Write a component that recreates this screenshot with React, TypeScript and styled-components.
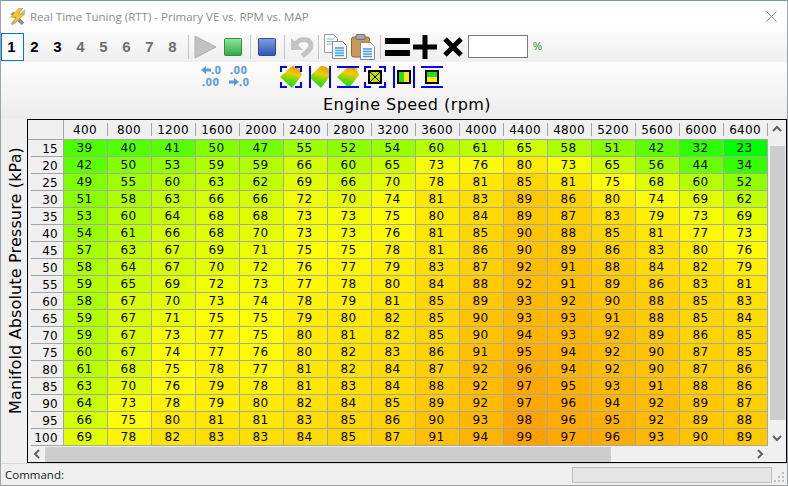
import React from "react"
import styled, { createGlobalStyle } from "styled-components"

const GlobalStyle = createGlobalStyle`
  html, body {
    margin: 0;
    padding: 0;
    width: 788px;
    height: 486px;
    overflow: hidden;
    background: #f0f0f0;
  }
`

const Win = styled.div`
  box-sizing: border-box;
  width: 788px;
  height: 486px;
  display: flex;
  flex-direction: column;
  background: #f0f0f0;
  border: 1px solid #9aa6a6;
  border-top-color: #6f9f9f;
  border-bottom-color: #a0a0a0;
  font-family: "DejaVu Sans", sans-serif;
  overflow: hidden;
`

const TitleBar = styled.div`
  height: 30px;
  display: flex;
  align-items: center;
  background: #fff;
  padding: 0 10px 0 8px;
  color: #8b8b8b;
  font: 11.5px "Open Sans", "Noto Sans", sans-serif;
  svg { flex: none; }
`

const TitleText = styled.span`
  margin-left: 4px;
  flex: 1;
`

const ToolRow = styled.div`
  height: 31px;
  box-sizing: border-box;
  display: flex;
  align-items: center;
  background: linear-gradient(#fbfbfb, #efefef);
`

const NumBtn = styled.div<{ $on?: boolean; $dim?: boolean }>`
  width: 23px;
  height: 28px;
  box-sizing: border-box;
  display: flex;
  align-items: center;
  justify-content: center;
  padding-right: 2px;
  font: bold 15px "Liberation Sans", sans-serif;
  color: ${p => (p.$dim ? "#6d6d6d" : "#000")};
  border: ${p => (p.$on ? "1px solid #0078d7" : "none")};
  background: ${p => (p.$on ? "#fafafa" : "transparent")};
`

const Sep = styled.div<{ $l?: number; $r?: number }>`
  width: 1px;
  height: 24px;
  background: #c4c4c4;
  margin: 0 ${p => p.$r ?? 5}px 0 ${p => p.$l ?? 5}px;
`

const Icon = styled.svg<{ $l?: number }>`
  display: block;
  flex: none;
  margin-left: ${p => p.$l ?? 0}px;
`

const PctBox = styled.div`
  width: 60px;
  height: 23px;
  box-sizing: border-box;
  margin-left: 5px;
  background: #fff;
  border: 1px solid #7a7a7a;
`

const Pct = styled.span`
  margin-left: 5px;
  font: 10px "Liberation Sans", sans-serif;
  color: #1a8a1a;
`

const Upper = styled.div`
  height: 57px;
  display: flex;
  flex-direction: column;
  background: linear-gradient(#fdfdfd, #ececec);
`

const IconRow = styled.div`
  display: flex;
  align-items: center;
  height: 28px;
  padding: 2px 0 0 199px;
  box-sizing: border-box;
`

const AxisTitle = styled.div`
  text-align: center;
  margin: 5px 0 0 26px;
  font-size: 16px;
  line-height: 19px;
  letter-spacing: 0.45px;
  color: #000;
`

const Middle = styled.div`
  display: flex;
  height: 344px;
`

const SideLabel = styled.div`
  width: 26px;
  flex: none;
  box-sizing: border-box;
  padding: 0 0 20px 3px;
  display: flex;
  align-items: center;
  justify-content: center;
`

const SideText = styled.span`
  writing-mode: vertical-rl;
  transform: rotate(180deg);
  font-size: 16px;
  letter-spacing: 0.15px;
  white-space: nowrap;
  color: #000;
`

const Frame = styled.div`
  box-sizing: border-box;
  width: 760px;
  height: 344px;
  border: 1px solid #000;
  display: grid;
  grid-template-columns: 740px 18px;
  grid-template-rows: 326px 16px;
  background: #f0f0f0;
`

const Sheet = styled.div`
  display: grid;
  grid-template-columns: 36px repeat(16, 44px);
  grid-template-rows: 20px repeat(18, 17px);
  font-size: 12px;
  line-height: 1;
  letter-spacing: 0.3px;
  color: #000;
  overflow: hidden;
`

const Corner = styled.div`
  border-right: 1px solid #a6a6a6;
  border-bottom: 1px solid #a6a6a6;
`

const ColHead = styled.div`
  position: relative;
  display: flex;
  align-items: center;
  justify-content: center;
  padding-right: 2px;
  border-bottom: 1px solid #a6a6a6;
  &::after {
    content: "";
    position: absolute;
    right: 0;
    top: 3px;
    bottom: 3px;
    width: 1px;
    background: #a6a6a6;
  }
`

const RowHead = styled.div`
  position: relative;
  display: flex;
  align-items: center;
  justify-content: flex-end;
  padding-right: 5px;
  border-right: 1px solid #a6a6a6;
  &::after {
    content: "";
    position: absolute;
    left: 3px;
    right: 0;
    bottom: 0;
    height: 1px;
    background: #a6a6a6;
  }
`

const heat = (v: number) => {
  if (v <= 75) return `rgb(${Math.round(((v - 23) / 52) * 255)},255,0)`
  return `rgb(255,${Math.round(255 - ((v - 75) / 24) * 95)},0)`
}

const Cell = styled.div<{ $v: number }>`
  display: flex;
  align-items: center;
  justify-content: center;
  padding-right: 2px;
  box-sizing: border-box;
  background: ${p => heat(p.$v)};
  border-right: 1px solid #a6a6a6;
  border-bottom: 1px solid #a6a6a6;
`

const VBar = styled.div`
  display: flex;
  flex-direction: column;
  align-items: flex-end;
  justify-content: space-between;
  padding-right: 1px;
  background: #f0f0f0;
`

const VThumb = styled.div`
  width: 15px;
  height: 274px;
  background: #cdcdcd;
`

const HBar = styled.div`
  display: flex;
  align-items: center;
  justify-content: space-between;
  background: #f0f0f0;
`

const HThumb = styled.div`
  width: 566px;
  height: 15px;
  margin: 1px auto 0 0;
  background: #cdcdcd;
`

const ArrowBtn = styled.div`
  width: 17px;
  height: 17px;
  flex: none;
  display: flex;
  align-items: center;
  justify-content: center;
`

const Arrow = styled.svg<{ $turn: number }>`
  width: 12px;
  height: 12px;
  transform: rotate(${p => p.$turn}deg);
`

const Filler = styled.div`
  background: #f0f0f0;
`

const Status = styled.div`
  flex: 1;
  display: flex;
  align-items: center;
  padding: 0 2px 0 4px;
  border-top: 1px solid #d8d8d8;
  font: 11.5px "Open Sans", "Noto Sans", sans-serif;
  color: #222;
`

const StatusText = styled.span`
  flex: 1;
`

const Progress = styled.div`
  width: 200px;
  height: 16px;
  box-sizing: border-box;
  background: #e6e6e6;
  border: 1px solid #bcbcbc;
`

const Grip = styled.svg`
  margin: 4px 0 0 1px;
  flex: none;
`

const rpm = [400, 800, 1200, 1600, 2000, 2400, 2800, 3200, 3600, 4000, 4400, 4800, 5200, 5600, 6000, 6400]

const rows: [number, number[]][] = [
  [15, [39, 40, 41, 50, 47, 55, 52, 54, 60, 61, 65, 58, 51, 42, 32, 23]],
  [20, [42, 50, 53, 59, 59, 66, 60, 65, 73, 76, 80, 73, 65, 56, 44, 34]],
  [25, [49, 55, 60, 63, 62, 69, 66, 70, 78, 81, 85, 81, 75, 68, 60, 52]],
  [30, [51, 58, 63, 66, 66, 72, 70, 74, 81, 83, 89, 86, 80, 74, 69, 62]],
  [35, [53, 60, 64, 68, 68, 73, 73, 75, 80, 84, 89, 87, 83, 79, 73, 69]],
  [40, [54, 61, 66, 68, 70, 73, 73, 76, 81, 85, 90, 88, 85, 81, 77, 73]],
  [45, [57, 63, 67, 69, 71, 75, 75, 78, 81, 86, 90, 89, 86, 83, 80, 76]],
  [50, [58, 64, 67, 70, 72, 76, 77, 79, 83, 87, 92, 91, 88, 84, 82, 79]],
  [55, [59, 65, 69, 72, 73, 77, 78, 80, 84, 88, 92, 91, 89, 86, 83, 81]],
  [60, [58, 67, 70, 73, 74, 78, 79, 81, 85, 89, 93, 92, 90, 88, 85, 83]],
  [65, [59, 67, 71, 75, 75, 79, 80, 82, 85, 90, 93, 93, 91, 88, 85, 84]],
  [70, [59, 67, 73, 77, 75, 80, 81, 82, 85, 90, 94, 93, 92, 89, 86, 85]],
  [75, [60, 67, 74, 77, 76, 80, 82, 83, 86, 91, 95, 94, 92, 90, 87, 85]],
  [80, [61, 68, 75, 78, 77, 81, 82, 84, 87, 92, 96, 94, 92, 90, 87, 86]],
  [85, [63, 70, 76, 79, 78, 81, 83, 84, 88, 92, 97, 95, 93, 91, 88, 86]],
  [90, [64, 73, 78, 79, 80, 82, 84, 85, 89, 92, 97, 96, 94, 92, 89, 87]],
  [95, [66, 75, 80, 81, 81, 83, 85, 86, 90, 93, 98, 96, 95, 92, 89, 88]],
  [100, [69, 78, 82, 83, 83, 84, 85, 87, 91, 94, 99, 97, 96, 93, 90, 89]],
]

const AppIcon = () => (
  <Icon width="17" height="17" viewBox="0 0 22 22">
    <path d="M2 8l14 14 4-3L6 5z" fill="#8f8f8f" />
    <path d="M1 21h6L21 7V1z" fill="#bdbdbd" />
    <path d="M13 0L2 12h7L4 22 20 8h-8l6-8z" fill="#f6c72e" stroke="#a98a20" strokeWidth="0.7" />
  </Icon>
)

const Play = () => (
  <Icon width="23" height="24" viewBox="0 0 23 24">
    <path d="M1 1l21 11L1 23z" fill="#c2c2c2" stroke="#b0b0b0" />
  </Icon>
)

const Square = ({ from, to, edge, l }: { from: string; to: string; edge: string; l: number }) => (
  <Icon width="18" height="18" viewBox="0 0 18 18" $l={l}>
    <defs>
      <linearGradient id={edge} x1="0" y1="0" x2="0" y2="1">
        <stop offset="0" stopColor={from} />
        <stop offset="1" stopColor={to} />
      </linearGradient>
    </defs>
    <rect x="0.5" y="0.5" width="17" height="17" rx="1" fill={`url(#${edge})`} stroke={edge} />
  </Icon>
)

const Undo = () => (
  <Icon width="25" height="24" viewBox="0 0 25 24">
    <path d="M6 9C10 3 20 3 21 10C21 15 16 18 12 21" fill="none" stroke="#c4c4c4" strokeWidth="5" />
    <path d="M1 3V15H13z" fill="#c4c4c4" />
  </Icon>
)

const Sheetlet = ({ x, y }: { x: number; y: number }) => (
  <g transform={`translate(${x} ${y})`}>
    <path d="M.5.5h10l4 4v13H.5z" fill="#fff" stroke="#8a8a8a" />
    <path d="M3 7h9M3 9.5h9M3 12h9M3 14.5h9" stroke="#3f9be8" strokeWidth="1.3" />
  </g>
)

const Copy = () => (
  <Icon width="25" height="26" viewBox="0 0 25 26">
    <path d="M1.5.5h9l4 4v14h-13z" fill="#fff" stroke="#9a9a9a" />
    <path d="M4 5h7M4 7.5h7M4 10h7" stroke="#7fb5e8" />
    <Sheetlet x={9} y={7} />
  </Icon>
)

const Paste = () => (
  <Icon width="25" height="26" viewBox="0 0 25 26" $l={3}>
    <rect x="0.5" y="3" width="18" height="20" rx="2" fill="#c9975a" stroke="#8f6a3a" />
    <rect x="5" y="0.5" width="9" height="5" rx="1" fill="#a8a8a8" stroke="#707070" />
    <Sheetlet x={9} y={8} />
  </Icon>
)

const Equal = () => (
  <Icon width="25" height="20" viewBox="0 0 25 20">
    <path d="M0 1h25v6H0zM0 13h25v6H0z" fill="#000" />
  </Icon>
)

const Plus = () => (
  <Icon width="24" height="24" viewBox="0 0 24 24" $l={3}>
    <path d="M9.5 0h5v9.5H24v5h-9.5V24h-5v-9.500H0v-5h9.500z" fill="#000" />
  </Icon>
)

const Times = () => (
  <Icon width="20" height="20" viewBox="0 0 20 20" $l={6}>
    <path d="M2 2l16 16M18 2L2 18" stroke="#000" strokeWidth="5" />
  </Icon>
)

const decimalText = {
  fontFamily: "Liberation Sans, sans-serif",
  fontSize: 11,
  fontWeight: 700,
  letterSpacing: 0.8,
  fill: "#5b9bd5",
  stroke: "#5b9bd5",
  strokeWidth: 0.3,
}

const DecimalLess = () => (
  <Icon width="23" height="24" viewBox="0 0 23 24">
    <path d="M1 5l5-4v2.500h5v3H6V9z" fill="#5b9bd5" />
    <text x="11" y="9" {...decimalText}>.0</text>
    <text x="2" y="21" {...decimalText}>.00</text>
  </Icon>
)

const DecimalMore = () => (
  <Icon width="23" height="24" viewBox="0 0 23 24" $l={5}>
    <text x="2" y="9" {...decimalText}>.00</text>
    <path d="M11 17l-5-4v2.500H1v3h5V21z" fill="#5b9bd5" />
    <text x="11" y="21" {...decimalText}>.0</text>
  </Icon>
)

type FrameKind = "corners" | "sides" | "ends"

const Brackets = ({ kind }: { kind: FrameKind }) => {
  const d = {
    corners: "M1 6V1h6M15 1h6v5M21 16v5h-6M7 21H1v-5",
    sides: "M1 0v22M21 0v22",
    ends: "M0 1h22M0 21h22",
  }[kind]
  return <path d={d} fill="none" stroke="#0000ff" strokeWidth="2" />
}

const MapFill = ({ id }: { id: string }) => (
  <>
    <defs>
      <linearGradient id={id} x1="0.65" y1="0" x2="0.4" y2="1">
        <stop offset="0" stopColor="#f29a00" />
        <stop offset="0.35" stopColor="#e8d000" />
        <stop offset="0.65" stopColor="#6cd800" />
        <stop offset="1" stopColor="#08e030" />
      </linearGradient>
    </defs>
    <path d="M0 11L12 0Q18 0 20 4L22 9L12 22z" fill={`url(#${id})`} />
  </>
)

const Selector = ({ kind, l, children }: { kind: FrameKind; l: number; children: React.ReactNode }) => (
  <Icon width="22" height="22" viewBox="0 0 22 22" $l={l}>
    {children}
    <Brackets kind={kind} />
  </Icon>
)

const Chevron = ({ turn }: { turn: number }) => (
  <ArrowBtn>
    <Arrow $turn={turn} viewBox="0 0 12 12">
      <path d="M2 8l4-4 4 4" fill="none" stroke="#606060" strokeWidth="2" />
    </Arrow>
  </ArrowBtn>
)

const App: React.FC = () => {
  return (
    <>
      <GlobalStyle />
      <Win>
        <TitleBar>
          <AppIcon />
          <TitleText>Real Time Tuning (RTT) - Primary VE vs. RPM vs. MAP</TitleText>
          <svg width="11" height="11" viewBox="0 0 11 11">
            <path d="M.5.500l10 10M10.500.500l-10 10" stroke="#8a8a8a" />
          </svg>
        </TitleBar>
        <ToolRow>
          {[1, 2, 3, 4, 5, 6, 7, 8].map(n => (
            <NumBtn key={n} $on={n === 1} $dim={n > 3}>{n}</NumBtn>
          ))}
          <Sep $l={3} $r={5} />
          <Play />
          <Square from="#8fe89a" to="#2fa84a" edge="#2f8f45" l={7} />
          <Sep $l={8} $r={7} />
          <Square from="#7fa0e0" to="#2f55b0" edge="#2a4a9a" l={0} />
          <Sep $l={8} $r={5} />
          <Undo />
          <Sep $l={3} $r={4} />
          <Copy />
          <Paste />
          <Sep $l={4} $r={4} />
          <Equal />
          <Plus />
          <Times />
          <PctBox />
          <Pct>%</Pct>
        </ToolRow>
        <Upper>
          <IconRow>
            <DecimalLess />
            <DecimalMore />
            <Selector kind="corners" l={29}><MapFill id="map1" /></Selector>
            <Selector kind="sides" l={7}><MapFill id="map2" /></Selector>
            <Selector kind="ends" l={6}><MapFill id="map3" /></Selector>
            <Selector kind="corners" l={5}>
              <rect x="5" y="5" width="12" height="12" fill="#c8e000" stroke="#000" strokeWidth="2" />
              <path d="M6 6l10 10M16 6L6 16" stroke="#000" />
            </Selector>
            <Selector kind="sides" l={7}>
              <rect x="5" y="5" width="6" height="12" fill="#20e020" />
              <rect x="11" y="5" width="6" height="12" fill="#ffee00" />
              <rect x="5" y="5" width="12" height="12" fill="none" stroke="#000" strokeWidth="2" />
            </Selector>
            <Selector kind="ends" l={6}>
              <rect x="5" y="5" width="12" height="6" fill="#20e020" />
              <rect x="5" y="11" width="12" height="6" fill="#ffee00" />
              <rect x="5" y="5" width="12" height="12" fill="none" stroke="#000" strokeWidth="2" />
            </Selector>
          </IconRow>
          <AxisTitle>Engine Speed (rpm)</AxisTitle>
        </Upper>
        <Middle>
          <SideLabel>
            <SideText>Manifold Absolute Pressure (kPa)</SideText>
          </SideLabel>
          <Frame>
            <Sheet>
              <Corner />
              {rpm.map(r => <ColHead key={r}>{r}</ColHead>)}
              {rows.map(([kpa, vals]) => (
                <React.Fragment key={kpa}>
                  <RowHead>{kpa}</RowHead>
                  {vals.map((v, i) => <Cell key={i} $v={v}>{v}</Cell>)}
                </React.Fragment>
              ))}
            </Sheet>
            <VBar>
              <Chevron turn={0} />
              <VThumb />
              <Chevron turn={180} />
            </VBar>
            <HBar>
              <Chevron turn={-90} />
              <HThumb />
              <Chevron turn={90} />
            </HBar>
            <Filler />
          </Frame>
        </Middle>
        <Status>
          <StatusText>Command:</StatusText>
          <Progress />
          <Grip width="12" height="12" viewBox="0 0 12 12">
            <path d="M9 1h2v2H9zM5 5h2v2H5zM9 5h2v2H9zM1 9h2v2H1zM5 9h2v2H5zM9 9h2v2H9z" fill="#bdbdbd" />
          </Grip>
        </Status>
      </Win>
    </>
  )
}

export default App
